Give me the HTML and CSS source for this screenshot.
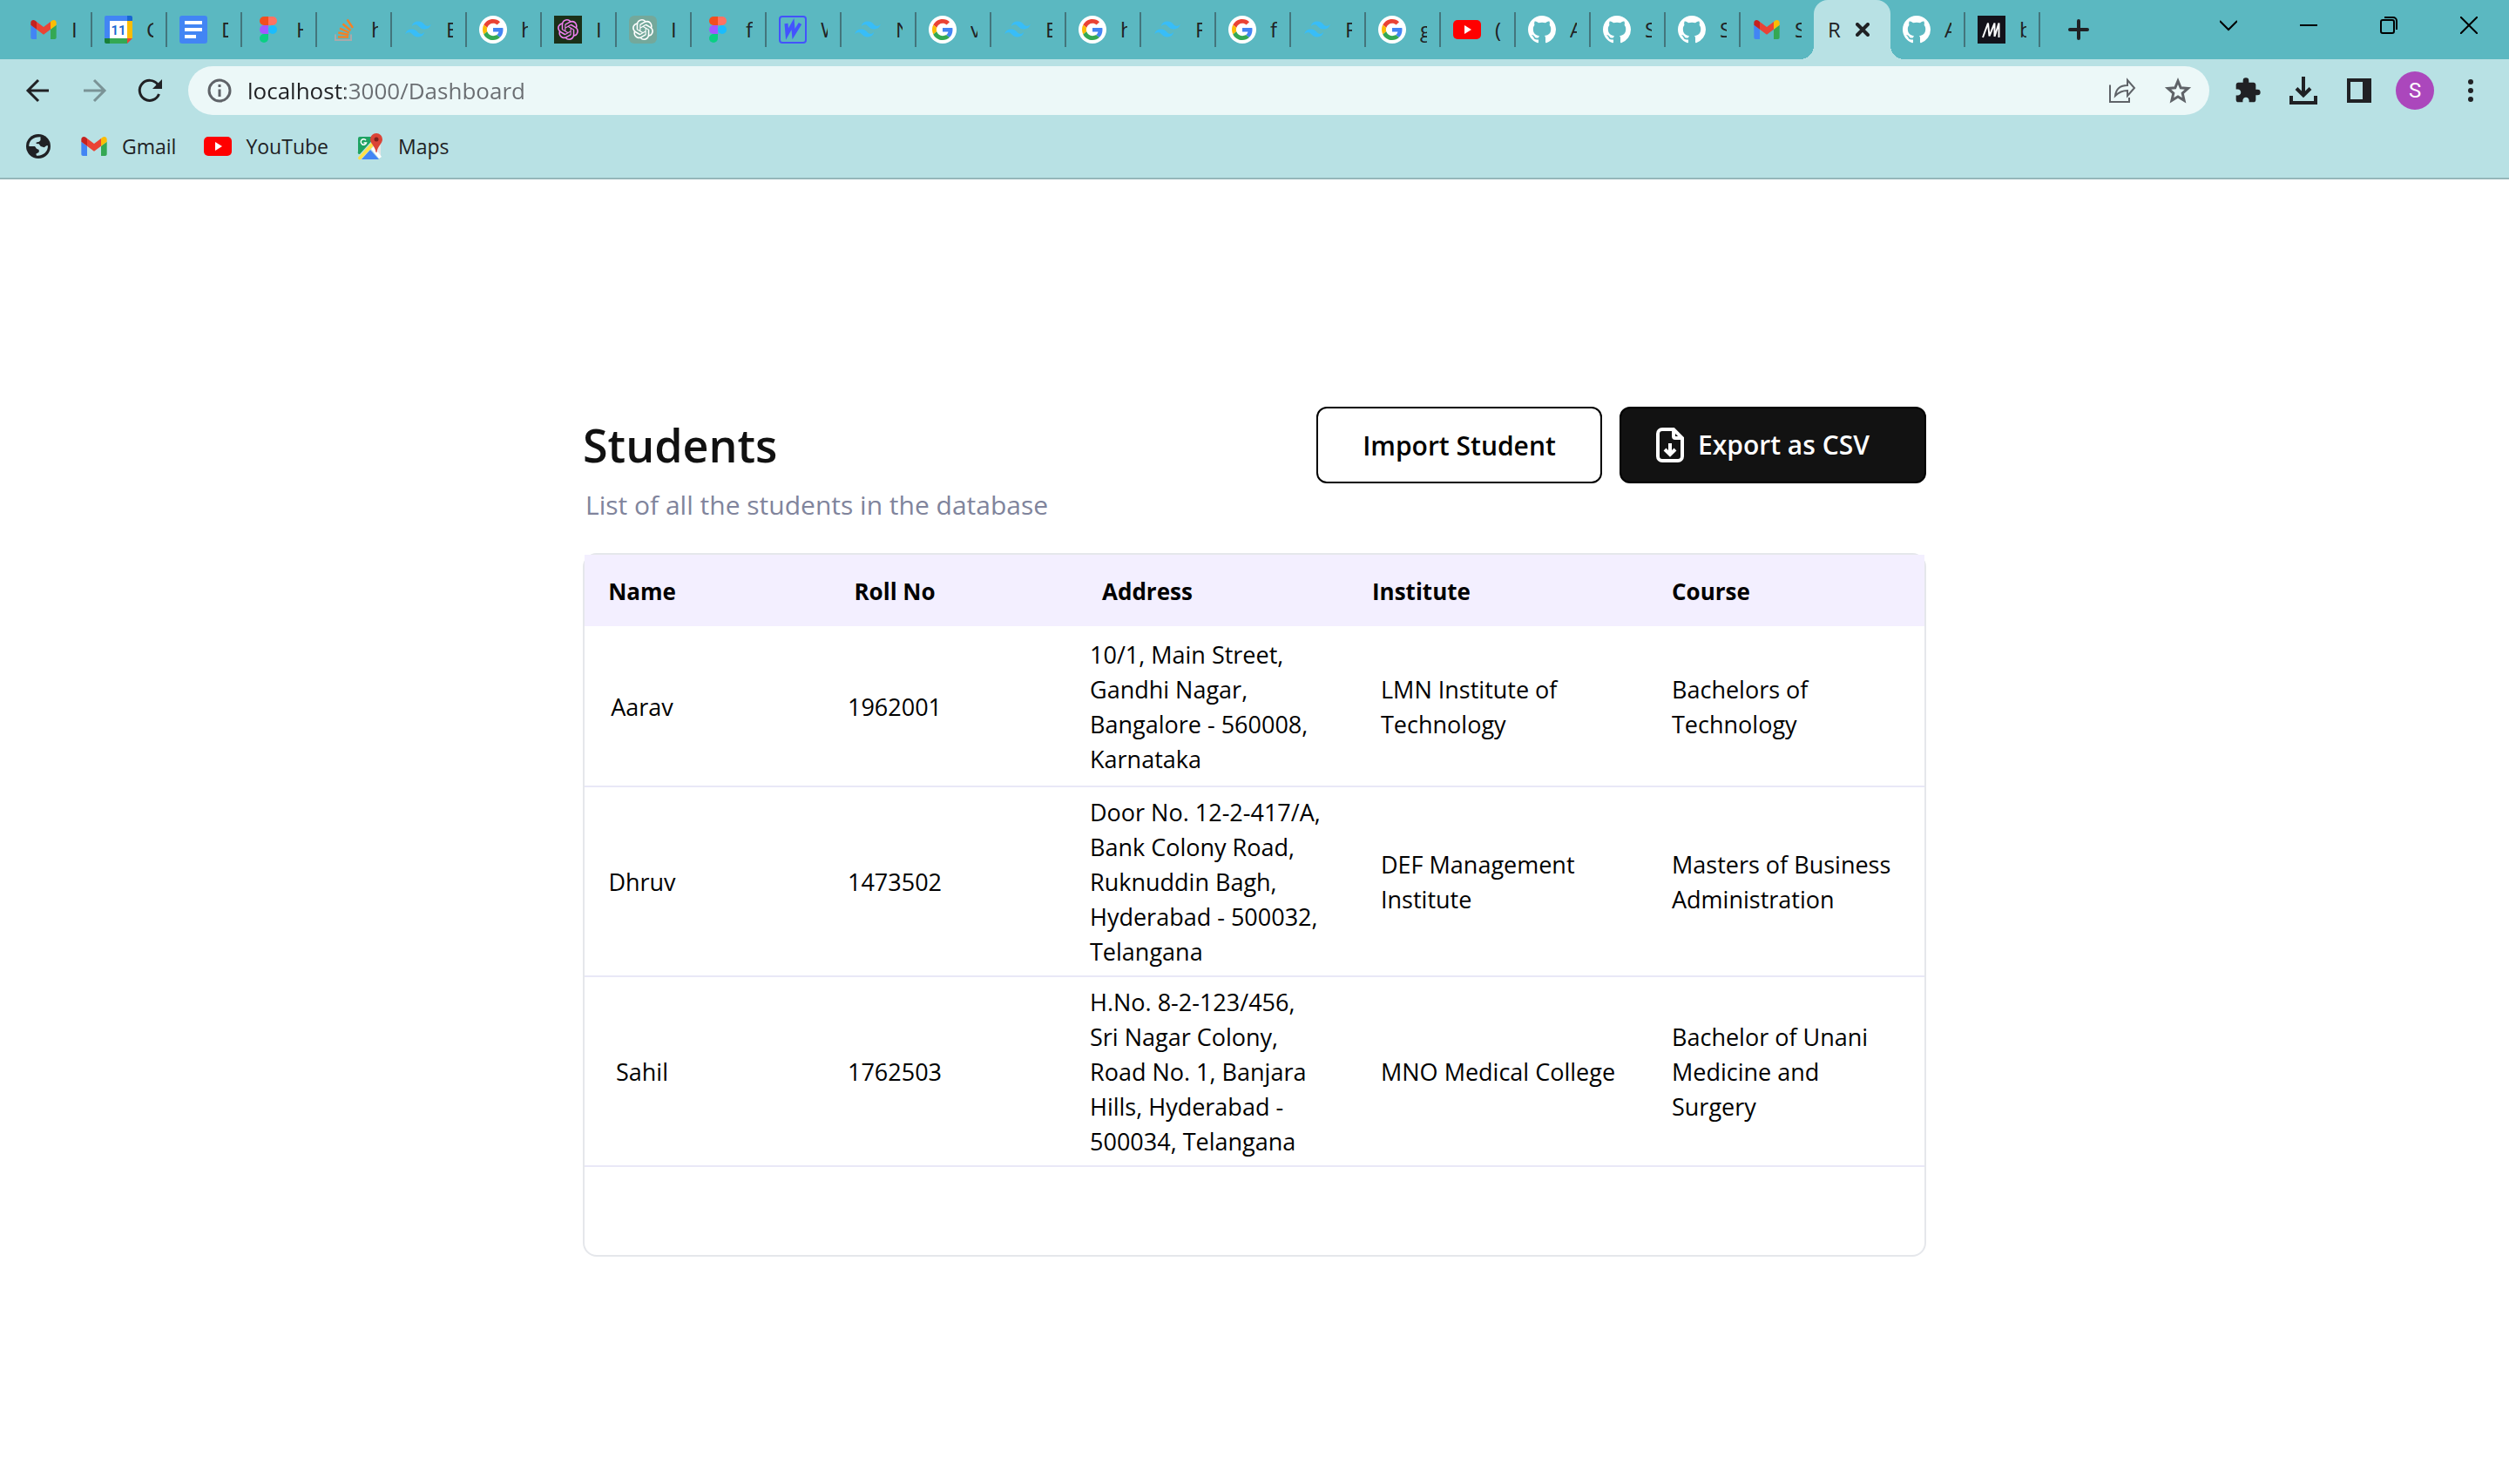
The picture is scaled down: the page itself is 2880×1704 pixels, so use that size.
FILE: index.html
```html
<!DOCTYPE html>
<html lang="en">
<head>
<meta charset="utf-8">
<title>Students Dashboard</title>
<link rel="stylesheet" href="styles.css">
</head>
<body>
<svg class="sprite" aria-hidden="true">
  <symbol id="gmail" viewBox="48 27 96 96">
    <path fill="#4285f4" d="M58 108h14V74L52 59v43c0 3.32 2.69 6 6 6"/>
    <path fill="#34a853" d="M120 108h14c3.32 0 6-2.69 6-6V59l-20 15"/>
    <path fill="#fbbc04" d="M120 48v26l20-15v-8c0-7.42-8.47-11.65-14.4-7.2"/>
    <path fill="#ea4335" d="M72 74V48l24 18 24-18v26L96 92"/>
    <path fill="#c5221f" d="M52 51v8l20 15V48l-5.6-4.2c-5.94-4.45-14.4-.22-14.4 7.2"/>
  </symbol>
  <symbol id="calendar" viewBox="0 0 32 32">
    <path fill="#4285f4" d="M2 0h24v6H6v20H0V2a2 2 0 0 1 2-2z"/>
    <path fill="#1967d2" d="M26 0h4a2 2 0 0 1 2 2v4h-6z"/>
    <path fill="#fbbc04" d="M26 6h6v20h-6z"/>
    <path fill="#34a853" d="M6 26h20v6H6z"/>
    <path fill="#188038" d="M0 26h6v6H2a2 2 0 0 1-2-2z"/>
    <path fill="#ea4335" d="M26 26h6l-6 6z"/>
    <path fill="#fff" d="M6 6h20v20H6z"/>
    <text x="16" y="22" text-anchor="middle" class="calendar-day">11</text>
  </symbol>
  <symbol id="docs" viewBox="0 0 32 32">
    <rect width="32" height="32" rx="3" fill="#4285f4"/>
    <path fill="#fff" d="M6 6h20v4H6zM6 14h20v4H6zM6 22h13v4H6z"/>
  </symbol>
  <symbol id="figma" viewBox="0 0 32 32">
    <path fill="#f24e1e" d="M16 1h-5a5 5 0 0 0 0 10h5z"/>
    <path fill="#ff7262" d="M16 1h5a5 5 0 0 1 0 10h-5z"/>
    <path fill="#a259ff" d="M16 11h-5a5 5 0 0 0 0 10h5z"/>
    <circle cx="21" cy="16" r="5" fill="#1abcfe"/>
    <path fill="#0acf83" d="M16 21h-5a5 5 0 1 0 5 5z"/>
  </symbol>
  <symbol id="stack" viewBox="0 0 32 32">
    <path fill="none" stroke="#a9a9ab" stroke-width="2" d="M7 21.500V28h18v-6.500"/>
    <path fill="none" stroke="#f48024" stroke-width="2.400" d="M10 24.500h12M10.300 19.500l12 2.500M12 14.500l11 5M15.500 9.500l9 7.500M20.500 4.500l6.500 9.500"/>
  </symbol>
  <symbol id="tailwind" viewBox="-2 -12 58 58">
    <path fill="#38bdf8" d="M27 0c-7.2 0-11.7 3.6-13.5 10.8 2.7-3.6 5.85-4.95 9.45-4.05 2.054.513 3.522 2.004 5.147 3.653C30.744 13.09 33.808 16.2 40.5 16.2c7.2 0 11.7-3.6 13.5-10.8-2.7 3.6-5.85 4.95-9.45 4.05-2.054-.513-3.522-2.004-5.147-3.653C36.756 3.11 33.692 0 27 0zM13.500 16.2C6.3 16.2 1.8 19.8 0 27c2.7-3.6 5.85-4.95 9.45-4.05 2.054.514 3.522 2.004 5.147 3.653C17.244 29.29 20.308 32.4 27 32.4c7.2 0 11.7-3.6 13.5-10.8-2.7 3.6-5.85 4.95-9.45 4.05-2.054-.513-3.522-2.004-5.147-3.653C23.256 19.31 20.192 16.2 13.5 16.2z"/>
  </symbol>
  <symbol id="google" viewBox="-8 -8 64 64">
    <circle cx="24" cy="24" r="32" fill="#fff"/>
    <path fill="#ea4335" d="M24 9.500c3.540 0 6.710 1.220 9.210 3.600l6.850-6.850C35.900 2.380 30.470 0 24 0 14.620 0 6.510 5.380 2.560 13.220l7.980 6.190C12.430 13.720 17.740 9.500 24 9.500z"/>
    <path fill="#4285f4" d="M46.980 24.550c0-1.570-.15-3.090-.38-4.550H24v9.020h12.940c-.58 2.960-2.260 5.480-4.780 7.180l7.730 6c4.510-4.180 7.090-10.360 7.090-17.650z"/>
    <path fill="#fbbc05" d="M10.530 28.590c-.48-1.450-.76-2.990-.76-4.590s.27-3.140.76-4.590l-7.980-6.190C.92 16.460 0 20.120 0 24c0 3.880.92 7.540 2.560 10.780l7.970-6.190z"/>
    <path fill="#34a853" d="M24 48c6.480 0 11.930-2.130 15.890-5.810l-7.730-6c-2.150 1.450-4.920 2.300-8.160 2.300-6.260 0-11.570-4.220-13.470-9.910l-7.980 6.190C6.510 42.620 14.620 48 24 48z"/>
  </symbol>
  <symbol id="openai" viewBox="-4 -4 32 32">
    <path d="M22.2819 9.8211a5.9847 5.9847 0 0 0-.5157-4.9108 6.0462 6.0462 0 0 0-6.5098-2.9A6.0651 6.0651 0 0 0 4.9807 4.1818a5.9847 5.9847 0 0 0-3.9977 2.9 6.0462 6.0462 0 0 0 .7427 7.0966 5.98 5.98 0 0 0 .511 4.9107 6.051 6.051 0 0 0 6.5146 2.9001A5.9847 5.9847 0 0 0 13.2599 24a6.0557 6.0557 0 0 0 5.7718-4.2058 5.9894 5.9894 0 0 0 3.9977-2.9001 6.0557 6.0557 0 0 0-.7475-7.0729zm-9.022 12.6081a4.4755 4.4755 0 0 1-2.8764-1.0408l.1419-.0804 4.7783-2.7582a.7948.7948 0 0 0 .3927-.6813v-6.7369l2.02 1.1686a.071.071 0 0 1 .038.052v5.5826a4.504 4.504 0 0 1-4.4945 4.4944zm-9.6607-4.1254a4.4708 4.4708 0 0 1-.5346-3.0137l.142.0852 4.783 2.7582a.7712.7712 0 0 0 .7806 0l5.8428-3.3685v2.3324a.0804.0804 0 0 1-.0332.0615L9.74 19.9502a4.4992 4.4992 0 0 1-6.1408-1.6464zM2.3408 7.8956a4.485 4.485 0 0 1 2.3655-1.9728V11.6a.7664.7664 0 0 0 .3879.6765l5.8144 3.3543-2.0201 1.1685a.0757.0757 0 0 1-.071 0l-4.8303-2.7865A4.504 4.504 0 0 1 2.3408 7.872zm16.5963 3.8558L13.1038 8.364 15.1192 7.2a.0757.0757 0 0 1 .071 0l4.8303 2.7913a4.4944 4.4944 0 0 1-.6765 8.1042v-5.6772a.79.79 0 0 0-.407-.667zm2.0107-3.0231l-.142-.0852-4.7735-2.7818a.7759.7759 0 0 0-.7854 0L9.409 9.2297V6.8974a.0662.0662 0 0 1 .0284-.0615l4.8303-2.7866a4.4992 4.4992 0 0 1 6.6802 4.66zM8.3065 12.863l-2.02-1.1638a.0804.0804 0 0 1-.038-.0567V6.0742a4.4992 4.4992 0 0 1 7.3757-3.4537l-.142.0805L8.704 5.459a.7948.7948 0 0 0-.3927.6813zm1.0976-2.3654l2.602-1.4998 2.6069 1.4998v2.9994l-2.5974 1.4997-2.6067-1.4997Z"/>
  </symbol>
  <symbol id="whimsical" viewBox="0 0 32 32">
    <rect x="1" y="1" width="30" height="30" rx="3" fill="none" stroke="#4353ff" stroke-width="2"/>
    <path fill="none" stroke="#4353ff" stroke-width="4" d="M8.500 9l1 12 6.500-11.500 1 11.500 7.500-12"/>
  </symbol>
  <symbol id="youtube" viewBox="0 0 32 32">
    <rect y="5" width="32" height="22" rx="5" fill="#f00"/>
    <path fill="#fff" d="M13 11l8 5-8 5z"/>
  </symbol>
  <symbol id="github" viewBox="0 0 16 16">
    <path fill="#fff" d="M8 0C3.580 0 0 3.580 0 8c0 3.540 2.290 6.530 5.470 7.590.4.07.55-.17.55-.38 0-.19-.01-.82-.01-1.490-2.010.37-2.530-.49-2.690-.94-.09-.23-.48-.94-.82-1.130-.28-.15-.68-.52-.01-.53.63-.01 1.080.58 1.230.82.72 1.210 1.870.87 2.330.66.07-.52.28-.87.51-1.070-1.780-.2-3.640-.89-3.640-3.950 0-.87.31-1.590.82-2.150-.08-.2-.36-1.020.08-2.120 0 0 .67-.21 2.200.82.64-.18 1.320-.27 2-.27s1.360.09 2 .27c1.530-1.040 2.200-.82 2.200-.82.44 1.100.16 1.920.08 2.120.51.56.82 1.270.82 2.150 0 3.070-1.870 3.750-3.650 3.950.29.25.54.73.54 1.480 0 1.070-.01 1.930-.01 2.200 0 .21.15.46.55.38A8.013 8.013 0 0 0 16 8c0-4.420-3.580-8-8-8z"/>
  </symbol>
  <symbol id="medium" viewBox="0 0 32 32">
    <path fill="#13121a" d="M0 0h32v32H0z"/>
    <path fill="none" stroke="#fff" stroke-width="2" stroke-linejoin="bevel" d="M6 25L12 8.500l1.500 15L19.500 8.500V24M19.500 24L24.500 8.500V25"/>
  </symbol>
  <symbol id="globe" viewBox="0 0 32 32">
    <circle cx="16" cy="16" r="14" fill="#202124"/>
    <path fill="#b8e1e4" d="M5.300 16C5 9.500 10.500 5 18.500 5.300V9l-1.500 1.800-3.200.7-.3 1.500 3.200.3 2 2.700 4 1.300 2.600-2h1.700C27 22.500 21.500 27.300 14 26.700l-.7-2 3.400-2V20l-2.700-1.300L12 16z"/>
  </symbol>
  <symbol id="maps" viewBox="0 0 32 32">
    <path fill="#1ea362" d="M4 5h18L4 25a2 2 0 0 1-2-3V7a2 2 0 0 1 2-2z"/>
    <path fill="#4285f4" d="M6 31l10-11 10 11z"/>
    <path fill="#e6e6e6" d="M19 17l9-6v18z"/>
    <path fill="#fff" d="M17 19l3-3 9 12-3 2z"/>
    <path fill="#ffe047" d="M20 9l3 3L5 31a2 2 0 0 1-3-2z"/>
    <path fill="#db4437" d="M23 1a7 7 0 0 1 7 7c0 5-6 8-6.500 15h-1C22 16 16 13 16 8a7 7 0 0 1 7-7z"/>
    <circle cx="23" cy="8" r="2.500" fill="#7b231e"/>
    <path fill="none" stroke="#fff" stroke-width="1.500" d="M11 9a3.200 3.200 0 1 0 .5 3H8.500"/>
  </symbol>
</svg>

<header class="browser">
  <div class="tab-strip">
    <nav class="tabs" aria-label="Open tabs">
      <button class="tab"><svg class="favicon"><use href="#gmail"/></svg><span class="tab-label">In</span></button>
      <button class="tab"><svg class="favicon"><use href="#calendar"/></svg><span class="tab-label">C</span></button>
      <button class="tab"><svg class="favicon"><use href="#docs"/></svg><span class="tab-label">D</span></button>
      <button class="tab"><svg class="favicon"><use href="#figma"/></svg><span class="tab-label">H</span></button>
      <button class="tab"><svg class="favicon"><use href="#stack"/></svg><span class="tab-label">h</span></button>
      <button class="tab"><svg class="favicon"><use href="#tailwind"/></svg><span class="tab-label">E</span></button>
      <button class="tab"><svg class="favicon"><use href="#google"/></svg><span class="tab-label">h</span></button>
      <button class="tab"><svg class="favicon favicon-pink"><use href="#openai"/></svg><span class="tab-label">I</span></button>
      <button class="tab"><svg class="favicon favicon-sage"><use href="#openai"/></svg><span class="tab-label">I</span></button>
      <button class="tab"><svg class="favicon"><use href="#figma"/></svg><span class="tab-label">f</span></button>
      <button class="tab"><svg class="favicon"><use href="#whimsical"/></svg><span class="tab-label">W</span></button>
      <button class="tab"><svg class="favicon"><use href="#tailwind"/></svg><span class="tab-label">N</span></button>
      <button class="tab"><svg class="favicon"><use href="#google"/></svg><span class="tab-label">v</span></button>
      <button class="tab"><svg class="favicon"><use href="#tailwind"/></svg><span class="tab-label">E</span></button>
      <button class="tab"><svg class="favicon"><use href="#google"/></svg><span class="tab-label">h</span></button>
      <button class="tab"><svg class="favicon"><use href="#tailwind"/></svg><span class="tab-label">F</span></button>
      <button class="tab"><svg class="favicon"><use href="#google"/></svg><span class="tab-label">f</span></button>
      <button class="tab"><svg class="favicon"><use href="#tailwind"/></svg><span class="tab-label">F</span></button>
      <button class="tab"><svg class="favicon"><use href="#google"/></svg><span class="tab-label">g</span></button>
      <button class="tab"><svg class="favicon"><use href="#youtube"/></svg><span class="tab-label">(</span></button>
      <button class="tab"><svg class="favicon"><use href="#github"/></svg><span class="tab-label">A</span></button>
      <button class="tab"><svg class="favicon"><use href="#github"/></svg><span class="tab-label">S</span></button>
      <button class="tab"><svg class="favicon"><use href="#github"/></svg><span class="tab-label">S</span></button>
      <button class="tab tab-plain"><svg class="favicon"><use href="#gmail"/></svg><span class="tab-label">S</span></button>
      <button class="tab tab-active" aria-current="page"><span class="tab-label">R</span><svg class="tab-close" viewBox="0 0 16 16"><path d="M2 2l12 12M14 2L2 14"/></svg></button>
      <button class="tab"><svg class="favicon"><use href="#github"/></svg><span class="tab-label">A</span></button>
      <button class="tab"><svg class="favicon"><use href="#medium"/></svg><span class="tab-label">b</span></button>
    </nav>
    <button class="new-tab" aria-label="New tab"><svg viewBox="0 0 24 24"><path d="M12 2v20M2 12h20"/></svg></button>
    <div class="window-controls">
      <button aria-label="Search tabs"><svg viewBox="0 0 20 20"><path d="M0 5l10 10L20 5"/></svg></button>
      <button aria-label="Minimize"><svg viewBox="0 0 20 20"><path d="M0 10h20"/></svg></button>
      <button aria-label="Restore"><svg viewBox="0 0 20 20"><rect x="1" y="4" width="15" height="15" rx="2"/><path d="M5 1h10a4 4 0 0 1 4 4v10"/></svg></button>
      <button aria-label="Close"><svg viewBox="0 0 20 20"><path d="M0 0l20 20M20 0L0 20"/></svg></button>
    </div>
  </div>

  <div class="toolbar">
    <button class="tool" aria-label="Back"><svg viewBox="0 0 32 32"><path class="line" d="M28 16H5M16 4L4 16l12 12"/></svg></button>
    <button class="tool tool-disabled" aria-label="Forward"><svg viewBox="0 0 32 32"><path class="line" d="M4 16h23M16 4l12 12-12 12"/></svg></button>
    <button class="tool" aria-label="Reload"><svg viewBox="0 0 32 32"><path class="line" d="M26.500 20A11.500 11.500 0 1 1 25 9"/><path d="M30 3v11H19z"/></svg></button>
    <div class="omnibox">
      <svg class="info" viewBox="0 0 28 28" aria-hidden="true"><circle cx="14" cy="14" r="12"/><path d="M14 12.500V21M14 7v3"/></svg>
      <input class="url" type="text" value="localhost:3000/Dashboard" aria-label="Address">
      <button class="tool tool-muted" aria-label="Share"><svg viewBox="0 0 32 32"><path class="thin" d="M2 9.500V29h22v-5M8 22c1-8 6-12 14-12V4l8 9-8 9v-6c-6 0-10 2-14 6z"/></svg></button>
      <button class="tool tool-muted" aria-label="Bookmark"><svg viewBox="0 0 32 32"><path class="star" d="M16 5l3.200 7.800 8.300.7-6.300 5.500 1.900 8.300L16 23l-7.100 4.300 1.900-8.300-6.300-5.500 8.300-.7z"/></svg></button>
    </div>
    <button class="tool" aria-label="Extensions"><svg viewBox="0 0 24 24"><path d="M20.500 11H19V7c0-1.100-.9-2-2-2h-4V3.500a2.500 2.500 0 0 0-5 0V5H4c-1.100 0-2 .9-2 2v3.800h1.500c1.490 0 2.700 1.210 2.700 2.700s-1.210 2.700-2.700 2.700H2V20c0 1.100.9 2 2 2h3.800v-1.500c0-1.490 1.210-2.700 2.700-2.700s2.700 1.210 2.700 2.700V22H17c1.100 0 2-.9 2-2v-4h1.500a2.500 2.500 0 0 0 0-5z"/></svg></button>
    <button class="tool" aria-label="Downloads"><svg viewBox="0 0 32 32"><path class="heavy" d="M16 0v21M8 13.500l8 8 8-8M2 22v8h28v-8"/></svg></button>
    <button class="tool" aria-label="Side panel"><svg viewBox="0 0 32 32"><path fill-rule="evenodd" d="M2 2h28v28H2zM6 6v20h14V6z"/></svg></button>
    <button class="tool" aria-label="Profile"><span class="avatar">S</span></button>
    <button class="tool" aria-label="Menu"><svg viewBox="0 0 32 32"><circle cx="16" cy="6" r="3"/><circle cx="16" cy="16" r="3"/><circle cx="16" cy="26" r="3"/></svg></button>
  </div>

  <nav class="bookmarks" aria-label="Bookmarks">
    <a href="#" aria-label="Web"><svg class="favicon"><use href="#globe"/></svg></a>
    <a href="#"><svg class="favicon"><use href="#gmail"/></svg>Gmail</a>
    <a href="#"><svg class="favicon"><use href="#youtube"/></svg>YouTube</a>
    <a href="#"><svg class="favicon"><use href="#maps"/></svg>Maps</a>
  </nav>
</header>

<main class="page">
  <div class="page-head">
    <div class="heading">
      <h1>Students</h1>
      <p>List of all the students in the database</p>
    </div>
    <div class="actions">
      <button class="btn">Import Student</button>
      <button class="btn btn-dark"><svg class="btn-icon" viewBox="0 0 32 40"><path d="M20 2H7a5 5 0 0 0-5 5v26a5 5 0 0 0 5 5h18a5 5 0 0 0 5-5V12zM20 2v8a2 2 0 0 0 2 2h8M16 18v12M10 25l6 6 6-6"/></svg>Export as CSV</button>
    </div>
  </div>

  <div class="card">
    <table class="students">
      <colgroup><col class="col-name"><col class="col-roll"><col class="col-address"><col class="col-institute"><col></colgroup>
      <thead>
        <tr><th>Name</th><th>Roll No</th><th>Address</th><th>Institute</th><th>Course</th></tr>
      </thead>
      <tbody>
        <tr>
          <td>Aarav</td><td>1962001</td>
          <td>10/1, Main Street,<br>Gandhi Nagar,<br>Bangalore - 560008,<br>Karnataka</td>
          <td>LMN Institute of<br>Technology</td>
          <td>Bachelors of<br>Technology</td>
        </tr>
        <tr>
          <td>Dhruv</td><td>1473502</td>
          <td>Door No. 12-2-417/A,<br>Bank Colony Road,<br>Ruknuddin Bagh,<br>Hyderabad - 500032,<br>Telangana</td>
          <td>DEF Management<br>Institute</td>
          <td>Masters of Business<br>Administration</td>
        </tr>
        <tr>
          <td>Sahil</td><td>1762503</td>
          <td>H.No. 8-2-123/456,<br>Sri Nagar Colony,<br>Road No. 1, Banjara<br>Hills, Hyderabad -<br>500034, Telangana</td>
          <td>MNO Medical College</td>
          <td>Bachelor of Unani<br>Medicine and<br>Surgery</td>
        </tr>
      </tbody>
    </table>
  </div>
</main>
</body>
</html>
```
FILE: styles.css
```css
* {
  box-sizing: border-box;
}

body {
  margin: 0;
  background: #fff;
  color: #000;
  font-family: "Open Sans", "Noto Sans", sans-serif;
  font-size: 27px;
  line-height: 40px;
}

button,
input {
  margin: 0;
  padding: 0;
  border: 0;
  background: none;
  color: inherit;
  font: inherit;
}

a {
  color: inherit;
  text-decoration: none;
}

svg {
  display: block;
  flex: none;
}

.sprite {
  position: absolute;
  width: 0;
  height: 0;
}

.calendar-day {
  fill: #1967d2;
  font: 600 15px Roboto, sans-serif;
}

/* Browser frame */
.browser {
  background: #b8e1e4;
  border-bottom: 2px solid #95b6b9;
  color: #202124;
}

.tab-strip {
  display: flex;
  height: 68px;
  padding-left: 20px;
  background: #5bb8c1;
}

.tabs {
  display: flex;
}

.tab {
  display: flex;
  align-items: center;
  gap: 16px;
  width: 86px;
  padding-left: 14px;
  font-size: 24px;
  background: linear-gradient(#43757c, #43757c) right center / 2px 40px no-repeat;
}

.tab-plain {
  background: none;
}

.tab-label {
  width: 8px;
  overflow: hidden;
  white-space: nowrap;
  text-align: left;
}

.favicon {
  width: 32px;
  height: 32px;
}

.favicon-pink {
  background: #1b3018;
  fill: #f07ff0;
}

.favicon-sage {
  border-radius: 6px;
  background: #74a89b;
  fill: #fff;
}

.tab-active {
  position: relative;
  width: 88px;
  margin-left: -2px;
  padding-left: 16px;
  border-radius: 16px 16px 0 0;
  background: #b8e1e4;
}

.tab-active::before,
.tab-active::after {
  content: "";
  position: absolute;
  bottom: 0;
  width: 16px;
  height: 16px;
}

.tab-active::before {
  right: 100%;
  background: radial-gradient(circle at 0 0, transparent 16px, #b8e1e4 16px);
}

.tab-active::after {
  left: 100%;
  background: radial-gradient(circle at 100% 0, transparent 16px, #b8e1e4 16px);
}

.tab-active .tab-label {
  width: 16px;
}

.tab-close {
  width: 16px;
  height: 16px;
  stroke: #202124;
  stroke-width: 4;
  stroke-linecap: round;
}

.new-tab {
  display: grid;
  place-items: center;
  width: 88px;
}

.new-tab svg {
  width: 24px;
  height: 24px;
  stroke: #202124;
  stroke-width: 4;
  stroke-linecap: round;
}

.window-controls {
  display: flex;
  height: 58px;
  margin-left: auto;
}

.window-controls button {
  display: grid;
  place-items: center;
  width: 92px;
}

.window-controls svg {
  width: 20px;
  height: 20px;
  fill: none;
  stroke: #000;
  stroke-width: 2;
}

.toolbar {
  display: flex;
  align-items: center;
  height: 72px;
  padding: 0 12px;
}

.tool {
  display: grid;
  place-items: center;
  flex: none;
  width: 64px;
  height: 56px;
}

.tool svg {
  width: 32px;
  height: 32px;
  fill: #202124;
}

.tool .line,
.tool .thin,
.tool .star,
.tool .heavy {
  fill: none;
  stroke: #202124;
  stroke-width: 3;
}

.tool .heavy {
  stroke-width: 4;
}

.tool-disabled {
  opacity: 0.4;
}

.tool-muted .thin {
  stroke: #5f6368;
  stroke-width: 2;
}

.tool-muted .star {
  stroke: #5f6368;
}

.omnibox {
  display: flex;
  align-items: center;
  flex: 1;
  height: 56px;
  margin: 0 12px;
  padding: 0 4px 0 22px;
  border-radius: 28px;
  background: #ecf8f8;
}

.info {
  width: 28px;
  height: 28px;
  margin-right: 18px;
  fill: none;
  stroke: #5f6368;
  stroke-width: 3;
}

.url {
  flex: 1;
  min-width: 0;
  height: 40px;
  background: linear-gradient(90deg, #202124 112px, #696d71 112px);
  -webkit-background-clip: text;
  background-clip: text;
  color: transparent;
  font-size: 26px;
}

.avatar {
  display: grid;
  place-items: center;
  width: 44px;
  height: 44px;
  border-radius: 50%;
  background: #ab47bc;
  color: #fff;
  font-family: Roboto, sans-serif;
  font-size: 24px;
}

.bookmarks {
  display: flex;
  gap: 32px;
  height: 64px;
  padding: 0 28px;
  font-size: 23px;
}

.bookmarks a {
  display: flex;
  align-items: center;
  gap: 16px;
  height: 56px;
}

/* Dashboard */
.page {
  max-width: 1574px;
  margin: 0 auto;
  padding: 261px 16px;
}

.page-head {
  display: flex;
  justify-content: space-between;
  align-items: flex-start;
}

.heading h1 {
  margin: 0;
  color: #111;
  font-size: 52px;
  font-weight: 600;
  line-height: 88px;
}

.heading p {
  margin: 0;
  padding: 5px 0 35px 3px;
  color: #80849c;
  font-size: 30px;
  line-height: 40px;
}

.actions {
  display: flex;
  gap: 20px;
}

.btn {
  width: 328px;
  height: 88px;
  padding-top: 2px;
  border: 2px solid #000;
  border-radius: 12px;
  background: #fff;
  font-size: 30px;
  font-weight: 600;
}

.btn-dark {
  display: flex;
  align-items: center;
  gap: 16px;
  width: 352px;
  padding: 0 0 0 40px;
  background: #121212;
  color: #fff;
}

.btn-icon {
  width: 32px;
  height: 40px;
  fill: none;
  stroke: #fff;
  stroke-width: 4;
}

.card {
  padding-bottom: 101px;
  border: 2px solid #e5e7eb;
  border-radius: 16px;
}

.students {
  width: 100%;
  table-layout: fixed;
  border-collapse: separate;
  border-spacing: 0;
}

.col-name {
  width: 132px;
}

.col-roll {
  width: 448px;
}

.col-address {
  width: 324px;
}

.col-institute {
  width: 344px;
}

.students th {
  height: 82px;
  padding: 2px 0 0;
  background: #f3efff;
  font-size: 26px;
  font-weight: 700;
  text-align: left;
}

.students td {
  height: 185px;
  padding: 9px 0 7px;
  border-bottom: 2px solid #e9e8f7;
}

.students th:nth-child(-n + 2),
.students td:nth-child(-n + 2) {
  text-align: center;
}

.students th:nth-child(3) {
  padding-left: 14px;
}

.students td:nth-child(4) {
  padding-left: 10px;
}
```
